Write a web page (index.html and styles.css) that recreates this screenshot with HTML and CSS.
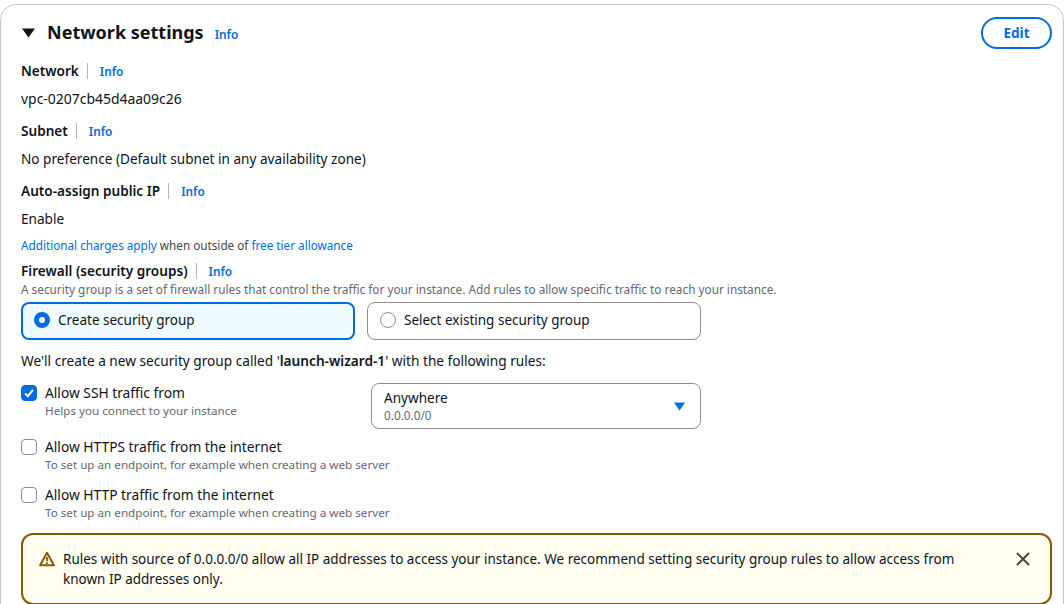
FILE: index.html
```html
<!DOCTYPE html>
<html lang="en">
<head>
<meta charset="utf-8">
<title>Network settings</title>
<link rel="stylesheet" href="styles.css">
</head>
<body>
<section class="card">
  <header class="head">
    <div class="head-left">
      <svg class="caret" width="14" height="10" viewBox="0 0 14 10"><path d="M0 0.5H13L6.5 9.5Z" fill="#0f141a"/></svg>
      <h2 class="title">Network settings</h2>
      <a class="info info-head">Info</a>
    </div>
    <button class="edit">Edit</button>
  </header>

  <div class="field">
    <div class="label-row"><span class="label">Network</span><a class="info">Info</a></div>
    <div class="value value-id">vpc-0207cb45d4aa09c26</div>
  </div>
  <div class="field">
    <div class="label-row"><span class="label">Subnet</span><a class="info">Info</a></div>
    <div class="value">No preference (Default subnet in any availability zone)</div>
  </div>
  <div class="field">
    <div class="label-row"><span class="label">Auto-assign public IP</span><a class="info">Info</a></div>
    <div class="value">Enable</div>
    <div class="charges"><a class="link">Additional charges apply</a> when outside of <a class="link">free tier allowance</a></div>
  </div>

  <div class="firewall">
    <div class="label-row"><span class="label">Firewall (security groups)</span><a class="info">Info</a></div>
    <div class="desc firewall-desc">A security group is a set of firewall rules that control the traffic for your instance. Add rules to allow specific traffic to reach your instance.</div>
    <div class="tiles">
      <div class="tile tile-on"><span class="radio radio-on"></span><span class="tile-label">Create security group</span></div>
      <div class="tile"><span class="radio"></span><span class="tile-label">Select existing security group</span></div>
    </div>
  </div>

  <p class="create-note">We'll create a new security group called '<b class="strong">launch-wizard-1</b>' with the following rules:</p>

  <div class="rule rule-ssh">
    <span class="check check-on"><svg width="14" height="14" viewBox="0 0 14 14"><path d="M3 7.4L5.8 10.2L11 3.9" fill="none" stroke="#fff" stroke-width="2"/></svg></span>
    <div class="rule-text">
      <div class="rule-name">Allow SSH traffic from</div>
      <div class="desc rule-desc">Helps you connect to your instance</div>
    </div>
    <div class="select">
      <div>
        <div class="select-name">Anywhere</div>
        <div class="select-sub">0.0.0.0/0</div>
      </div>
      <svg class="select-caret" width="11" height="9" viewBox="0 0 11 9"><path d="M0 0.5H11L5.5 8.5Z" fill="#006ce0"/></svg>
    </div>
  </div>
  <div class="rule">
    <span class="check"></span>
    <div class="rule-text">
      <div class="rule-name">Allow HTTPS traffic from the internet</div>
      <div class="desc rule-desc">To set up an endpoint, for example when creating a web server</div>
    </div>
  </div>
  <div class="rule">
    <span class="check"></span>
    <div class="rule-text">
      <div class="rule-name">Allow HTTP traffic from the internet</div>
      <div class="desc rule-desc">To set up an endpoint, for example when creating a web server</div>
    </div>
  </div>

  <div class="alert">
    <svg class="alert-icon" width="16" height="16" viewBox="0 0 16 16"><path d="M8 1.8L14.9 14.2H1.1Z" fill="none" stroke="#855900" stroke-width="2" stroke-linejoin="round"/><path d="M8 6V10.2M8 11.2V13" fill="none" stroke="#855900" stroke-width="1.8"/></svg>
    <div class="alert-text">Rules with source of 0.0.0.0/0 allow all IP addresses to access your instance. We recommend setting security group rules to allow access from known IP addresses only.</div>
    <svg class="alert-close" width="16" height="16" viewBox="0 0 16 16"><path d="M2 2L14 14M14 2L2 14" fill="none" stroke="#424650" stroke-width="2"/></svg>
  </div>
</section>
</body>
</html>
```
FILE: styles.css
```css
html, body {
  margin: 0;
  padding: 0;
  height: 604px;
  overflow: hidden;
  background: #fff;
}
body {
  padding-top: 4px;
  box-sizing: border-box;
  font-family: "Noto Sans", "Open Sans", sans-serif;
  font-size: 13.6px;
  line-height: 20px;
  color: #0f141a;
}
.card {
  box-sizing: border-box;
  width: 1064px;
  height: 640px;
  border: 1px solid #c6c6cd;
  border-radius: 16px;
  padding: 14px 11px 0 20px;
}
.head {
  display: flex;
  justify-content: space-between;
  align-items: flex-start;
  height: 42px;
}
.head-left {
  display: flex;
  align-items: center;
  height: 26px;
}
.caret {
  margin: 1px 11px 0 1px;
}
.title {
  margin: 0;
  font-size: 18px;
  line-height: 24px;
  font-weight: 700;
}
.info {
  font-size: 11.8px;
  line-height: 16px;
  font-weight: 600;
  color: #006ce0;
}
.info-head {
  margin: 4px 0 0 11px;
}
.edit {
  box-sizing: border-box;
  width: 71px;
  height: 32px;
  margin-top: -2px;
  border: 2px solid #006ce0;
  border-radius: 16px;
  background: #fff;
  color: #006ce0;
  font: 700 13.6px/20px "Noto Sans", sans-serif;
  padding: 0;
}
.field {
  margin-bottom: 12px;
}
.label-row {
  display: flex;
  align-items: center;
  height: 20px;
}
.label {
  font-size: 13.6px;
  font-weight: 600;
  padding-right: 8px;
  border-right: 1px solid #b4b4bb;
  line-height: 16px;
  margin-right: 12px;
}
.value {
  margin-top: 8px;
}
.value-id {
  font-size: 13.95px;
}
.charges {
  margin-top: 8px;
  font-size: 11.72px;
  line-height: 16px;
  color: #424650;
}
.link {
  color: #006ce0;
}
.firewall {
  margin-top: -4px;
}
.desc {
  font-size: 11.8px;
  line-height: 16px;
  color: #656871;
}
.rule-desc {
  font-size: 11.67px;
}
.tiles {
  display: flex;
  gap: 12px;
  margin-top: 5px;
}
.tile {
  box-sizing: border-box;
  display: flex;
  align-items: center;
  width: 334px;
  height: 38px;
  padding: 0 12px 2px;
  border: 1px solid #8c8c94;
  border-radius: 8px;
}
.tile-on {
  background: #f0fbff;
  border: 2px solid #006ce0;
  padding: 0 11px 2px;
}
.tile-label {
  font-size: 13.5px;
}
.radio {
  box-sizing: border-box;
  width: 16px;
  height: 16px;
  margin-right: 8px;
  border: 1px solid #8c8c94;
  border-radius: 50%;
  background: #fff;
}
.radio-on {
  border: 5px solid #006ce0;
}
.create-note {
  margin: 11px 0 12px;
  font-size: 13.67px;
}
.strong {
  font-weight: 600;
}
.rule {
  display: flex;
  align-items: flex-start;
  height: 36px;
  margin-bottom: 12px;
}
.rule-ssh {
  height: 42px;
}
.check {
  box-sizing: border-box;
  display: flex;
  width: 16px;
  height: 16px;
  margin: 2px 8px 0 0;
  border: 1px solid #8c8c94;
  border-radius: 4px;
  background: #fff;
}
.check-on {
  border: 1px solid #006ce0;
  background: #006ce0;
  align-items: center;
  justify-content: center;
}
.rule-text {
  width: 326px;
  white-space: nowrap;
}
.rule-name {
  font-size: 13.78px;
}
.select {
  box-sizing: border-box;
  display: flex;
  align-items: center;
  justify-content: space-between;
  width: 330px;
  height: 46px;
  padding: 0 15px 0 12px;
  border: 1px solid #8c8c94;
  border-radius: 8px;
}
.select-name {
  line-height: 18px;
}
.select-sub {
  margin-top: 0.5px;
  font-size: 11.8px;
  line-height: 16px;
  color: #656871;
}
.alert {
  box-sizing: border-box;
  display: flex;
  align-items: flex-start;
  width: 1031px;
  height: 72px;
  padding: 14px 19px 0 16px;
  border: 2px solid #855900;
  border-radius: 12px;
  background: #fffef0;
}
.alert-icon {
  flex: none;
  margin: 2px 8px 0 0;
}
.alert-text {
  flex: 1;
  font-size: 13.5px;
}
.alert-close {
  flex: none;
  margin: 2px 0 0 40px;
}
```
